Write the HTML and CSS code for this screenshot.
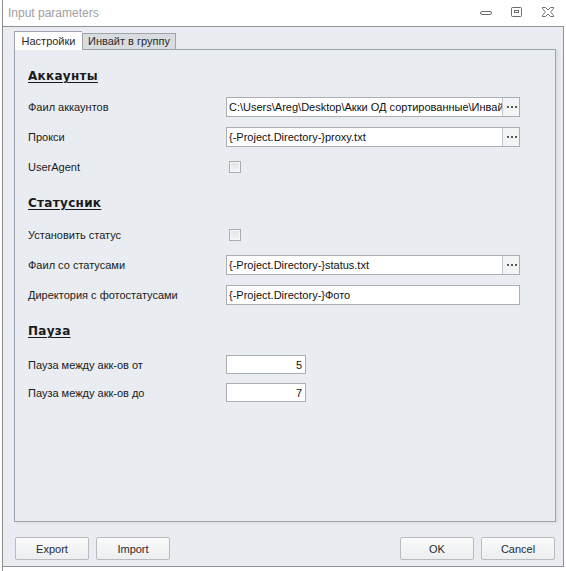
FILE: index.html
```html
<!DOCTYPE html>
<html lang="ru">
<head>
<meta charset="utf-8">
<title>Input parameters</title>
<link rel="stylesheet" href="styles.css">
</head>
<body>
<div class="window">
  <div class="titlebar">
    <span class="title">Input parameters</span>
    <div class="controls">
      <svg class="ctl" width="14" height="12" viewBox="0 0 14 12"><rect x="1.5" y="5.5" width="11" height="3" rx="1.5" fill="none" stroke="#6d6d6d"/></svg>
      <svg class="ctl" width="14" height="12" viewBox="0 0 14 12"><rect x="1.5" y="1.5" width="10" height="9" rx="1" fill="none" stroke="#6d6d6d"/><rect x="4.5" y="4.5" width="4" height="2" fill="none" stroke="#6d6d6d"/></svg>
      <svg class="ctl" width="14" height="12" viewBox="0 0 14 12"><path d="M1.5 1.5h3l2.5 2.5 2.5-2.5h3v1.2L10 5.5v1l2.5 2.8v1.2h-3L7 8 4.5 10.5h-3V9.3L4 6.5v-1L1.5 2.7z" fill="none" stroke="#6d6d6d" stroke-linejoin="round"/></svg>
    </div>
  </div>
  <div class="client">
    <div class="tabs">
      <div class="tab active">Настройки</div>
      <div class="tab">Инвайт в группу</div>
    </div>
    <div class="panel">
      <section class="section">
        <h2 class="heading">Аккаунты</h2>
        <div class="rows">
          <label class="label">Фаил аккаунтов</label>
          <div class="field with-btn"><span class="value">C:\Users\Areg\Desktop\Акки ОД сортированные\Инвайт</span><span class="browse"><svg width="17" height="18" viewBox="0 0 17 18"><g fill="#5a5a5a"><rect x="4" y="8" width="2" height="2"/><rect x="8" y="8" width="2" height="2"/><rect x="12" y="8" width="2" height="2"/></g></svg></span></div>
          <label class="label">Прокси</label>
          <div class="field with-btn"><span class="value">{-Project.Directory-}proxy.txt</span><span class="browse"><svg width="17" height="18" viewBox="0 0 17 18"><g fill="#5a5a5a"><rect x="4" y="8" width="2" height="2"/><rect x="8" y="8" width="2" height="2"/><rect x="12" y="8" width="2" height="2"/></g></svg></span></div>
          <label class="label">UserAgent</label>
          <div class="check-cell"><span class="checkbox"></span></div>
        </div>
      </section>
      <section class="section">
        <h2 class="heading">Статусник</h2>
        <div class="rows">
          <label class="label">Установить статус</label>
          <div class="check-cell"><span class="checkbox"></span></div>
          <label class="label">Фаил со статусами</label>
          <div class="field with-btn"><span class="value">{-Project.Directory-}status.txt</span><span class="browse"><svg width="17" height="18" viewBox="0 0 17 18"><g fill="#5a5a5a"><rect x="4" y="8" width="2" height="2"/><rect x="8" y="8" width="2" height="2"/><rect x="12" y="8" width="2" height="2"/></g></svg></span></div>
          <label class="label">Директория с фотостатусами</label>
          <div class="field"><span class="value">{-Project.Directory-}Фото</span></div>
        </div>
      </section>
      <section class="section pause">
        <h2 class="heading">Пауза</h2>
        <div class="rows tight">
          <label class="label">Пауза между акк-ов от</label>
          <div class="field num"><span class="value">5</span></div>
          <label class="label">Пауза между акк-ов до</label>
          <div class="field num"><span class="value">7</span></div>
        </div>
      </section>
    </div>
    <div class="buttons">
      <button class="btn">Export</button>
      <button class="btn">Import</button>
      <span class="spacer"></span>
      <button class="btn">OK</button>
      <button class="btn">Cancel</button>
    </div>
  </div>
</div>
</body>
</html>
```
FILE: styles.css
```css
* { box-sizing: border-box; }

html, body {
  margin: 0;
  padding: 0;
  background: #ffffff;
}

body {
  font-family: "Liberation Sans", Arial, sans-serif;
  font-size: 11px;
  color: #1b1b1b;
}

.window {
  margin-left: 2px;
  width: 562px;
  height: 571px;
  border-left: 1px solid #8d8d8d;
  display: flex;
  flex-direction: column;
}

.titlebar {
  height: 26px;
  flex: none;
  display: flex;
  align-items: center;
  padding-left: 5px;
  background: #ffffff;
}

.title {
  font-family: "Liberation Sans", sans-serif;
  font-size: 12px;
  color: #a0a0a0;
  margin-top: -1px;
}

.controls {
  margin-left: auto;
  display: flex;
  gap: 17px;
  margin-right: 9px;
  margin-top: -2px;
}

.ctl { display: block; }

.client {
  height: 541px;
  background: #e9ecf0;
  border-top: 1px solid #8f9296;
  border-right: 1px solid #8f9296;
  border-bottom: 1px solid #8f9296;
  padding: 4px 7px 6px 11px;
  display: flex;
  flex-direction: column;
}

.tabs {
  display: flex;
  align-items: flex-end;
  height: 18px;
  position: relative;
  z-index: 1;
}

.tab {
  width: 94px;
  height: 16px;
  line-height: 15px;
  text-align: center;
  background: #d9dde2;
  border: 1px solid #a0a4a9;
  border-bottom: none;
  color: #2b2b2b;
}

.tab.active {
  width: 68px;
  height: 19px;
  margin-bottom: -1px;
  background: #ffffff;
  line-height: 18px;
  border-right: none;
}

.panel {
  flex: 1;
  border: 1px solid #9ea3a9;
  background: #e9ecf0;
  box-shadow: 2px 1px 3px rgba(0, 0, 0, 0.08);
  padding: 18px 13px 0 13px;
}

.section + .section { margin-top: 18px; }

.heading {
  margin: 0 0 13px 0;
  font-family: "DejaVu Sans", sans-serif;
  font-size: 12px;
  line-height: 16px;
  font-weight: bold;
  letter-spacing: 0.3px;
  text-decoration: underline;
  text-underline-offset: 2px;
  color: #1a1a1a;
}

.section:nth-child(2) .heading { margin-bottom: 14px; }
.section.pause .heading { margin-bottom: 16px; }

.rows {
  display: grid;
  grid-template-columns: 198px 294px;
  grid-auto-rows: 20px;
  row-gap: 10px;
  align-items: center;
}

.rows.tight {
  grid-auto-rows: 19px;
  row-gap: 9px;
}

.label { color: #1b1b1b; }

.field {
  height: 20px;
  background: #ffffff;
  border: 1px solid #abaeb3;
  display: flex;
  align-items: center;
  overflow: hidden;
}

.rows.tight .field { height: 19px; }

.value {
  flex: 1;
  min-width: 0;
  padding-left: 2px;
  white-space: nowrap;
  overflow: hidden;
  color: #111111;
}

.browse {
  flex: none;
  width: 17px;
  height: 100%;
  border-left: 1px solid #c4c7cc;
  background: #f3f4f6;
}

.browse svg { display: block; }

.field.num { width: 80px; }
.field.num .value { text-align: right; padding-right: 3px; }

.check-cell { display: flex; align-items: center; padding-left: 3px; }

.checkbox {
  width: 12px;
  height: 12px;
  border: 1px solid #a9abae;
  background: linear-gradient(#e4e5e7, #f3f4f5);
  box-shadow: inset 0 0 0 1px #f7f7f7;
}

.buttons {
  display: flex;
  gap: 7px;
  margin-top: 15px;
  height: 23px;
  padding-left: 1px;
  padding-right: 1px;
}

.spacer { flex: 1; }

.btn {
  width: 74px;
  height: 23px;
  font: inherit;
  color: #2a2a2a;
  background: linear-gradient(#fafafa, #eceef0);
  border: 1px solid #b8bbbf;
  border-radius: 2px;
  padding: 0;
}
```
